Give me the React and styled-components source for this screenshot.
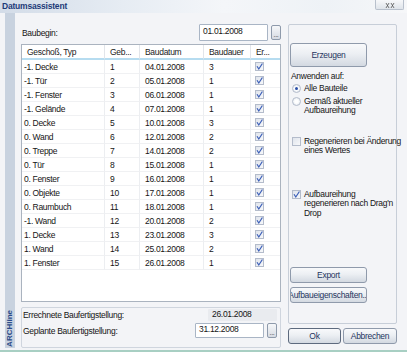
import React from "react";
import styled, { createGlobalStyle } from "styled-components";

const Global = createGlobalStyle`
html, body {
  margin: 0;
  padding: 0;
  background: #ffffff;
}
body {
  font-family: "Liberation Sans", Arial, sans-serif;
  font-size: 8.5px;
  letter-spacing: -0.3px;
  color: #151515;
}
`;

const Window = styled.div`
width: 407px;
height: 352px;
box-sizing: border-box;
background: #f3f4f7;
border-bottom: 2px solid #a8cfc3;
display: flex;
flex-direction: column;
`;

const TitleBar = styled.div`
height: 13px;
display: flex;
align-items: flex-start;
justify-content: space-between;
background: linear-gradient(to right, #d3dce8 0%, #e6ecf3 30%, #f4f6f9 55%, #eef2f6 80%, #f6f7f9 100%);
`;

const Title = styled.div`
font-weight: bold;
font-size: 8.5px;
letter-spacing: -0.2px;
color: #1d3a78;
padding: 1px 0 0 2px;
`;

const CloseButton = styled.div`
width: 29px;
height: 10px;
margin-right: 3px;
box-sizing: border-box;
border: 1px solid #b8c0cc;
border-top: none;
border-radius: 0 0 2px 2px;
background: linear-gradient(#f7f8fa, #dfe4ea);
display: flex;
justify-content: center;
align-items: flex-end;
`;

const Body = styled.div`
flex: 1;
display: flex;
`;

const SideStrip = styled.div`
width: 10px;
margin-left: 5px;
margin-bottom: 2px;
background: #c8d2df;
display: flex;
align-items: flex-end;
justify-content: center;
`;

const Brand = styled.div`
writing-mode: vertical-rl;
transform: rotate(180deg);
font-weight: bold;
font-size: 8px;
letter-spacing: 0;
color: #2a4b88;
line-height: 10px;
padding-top: 1px;
`;

const Main = styled.div`
width: 260px;
margin-left: 6px;
display: flex;
flex-direction: column;
`;

const FieldRow = styled.div`
display: flex;
align-items: center;
height: ${p => p.h || 17}px;
margin-top: ${p => p.mt || 0}px;
padding-left: ${p => p.pl || 0}px;
`;

const Label = styled.div`
flex: 1;
`;

const DateInput = styled.div`
width: 69px;
height: ${p => p.h || 17}px;
box-sizing: border-box;
border: 1px solid #a9b5c5;
border-radius: 1px;
background: ${p => (p.readOnly ? "#e9ebef" : "#ffffff")};
border-color: ${p => (p.readOnly ? "#e9ebef" : "#a9b5c5")};
padding: 1px 0 0 3px;
line-height: ${p => (p.h || 17) - 6}px;
`;

const DotsButton = styled.div`
width: 10px;
height: 15px;
margin-left: 3px;
box-sizing: border-box;
border: 1px solid #8e9aab;
border-radius: 2px;
background: linear-gradient(#f6f7f9, #d6dbe3);
font-size: 7px;
line-height: 17px;
text-align: center;
color: #444;
visibility: ${p => (p.hidden ? "hidden" : "visible")};
`;

const Table = styled.div`
margin-top: 3px;
height: 258px;
box-sizing: border-box;
border: 1px solid #aab3bf;
background: #ffffff;
`;

const Grid = styled.div`
display: grid;
grid-template-columns: 83px 35px 64px 47px 1fr;
`;

const HeadCell = styled.div`
height: 13px;
line-height: 14px;
padding-left: ${p => p.pl || 5}px;
border-bottom: 2px solid #b6dcf0;
border-right: ${p => (p.last ? "none" : "1px solid #e2e5ea")};
color: #222;
white-space: nowrap;
`;

const Cell = styled.div`
height: 14px;
line-height: 14px;
padding-left: ${p => p.pl || 2}px;
border-bottom: 1px solid #f0f1f3;
border-right: ${p => (p.last ? "none" : "1px solid #eceef1")};
box-sizing: border-box;
white-space: nowrap;
display: flex;
align-items: center;
`;

const CheckBox = styled.div`
width: 9px;
height: 9px;
box-sizing: border-box;
border: 1px solid #b4bccb;
background: linear-gradient(135deg, #dfe4ec, #f7f8fa);
flex-shrink: 0;
position: relative;
`;

const Tick = () => (
  <svg width="9" height="9" viewBox="0 0 9 9" style={{ position: "absolute", left: -1, top: -1 }}>
    <path d="M2 4.2 L3.8 7 L7.4 1.5" fill="none" stroke="#3b5fb8" strokeWidth="1.2" />
  </svg>
);

const Check = ({ checked }) => <CheckBox>{checked && <Tick />}</CheckBox>;

const FooterGroup = styled.div`
margin-top: 5px;
height: 41px;
box-sizing: border-box;
border: 1px solid #cfd5de;
border-radius: 2px;
padding: 1px 3px 0 1px;
`;

const RightCol = styled.div`
width: 109px;
margin-left: 7px;
margin-top: 11px;
display: flex;
flex-direction: column;
`;

const Group = styled.div`
height: 300px;
box-sizing: border-box;
border: 1px solid #c7ced8;
border-radius: 2px;
padding: 18px 0 0 1px;
display: flex;
flex-direction: column;
`;

const Button = styled.div`
width: ${p => p.w || 77}px;
height: ${p => p.h || 16}px;
box-sizing: border-box;
border: 1px solid ${p => (p.primary ? "#5d6a7e" : "#8f9aab")};
border-radius: 3px;
background: linear-gradient(#f8f9fb 0%, #eceff3 45%, #d3d9e1 100%);
display: flex;
align-items: center;
justify-content: center;
color: #1f3560;
white-space: nowrap;
overflow: hidden;
margin-top: ${p => p.mt || 0}px;
`;

const Caption = styled.div`
margin-top: ${p => p.mt || 0}px;
padding-left: 1px;
line-height: 10px;
`;

const Option = styled.div`
display: flex;
align-items: flex-start;
margin-top: ${p => p.mt || 0}px;
padding-left: 2px;
line-height: 9.5px;
`;

const Radio = styled.div`
width: 9px;
height: 9px;
box-sizing: border-box;
border-radius: 50%;
border: 1px solid #b4bccb;
background: radial-gradient(circle, #ffffff 30%, #dde3eb 100%);
margin-right: 3px;
flex-shrink: 0;
display: flex;
align-items: center;
justify-content: center;
&::after {
  content: "";
  width: 3px;
  height: 3px;
  border-radius: 50%;
  background: ${p => (p.checked ? "#2a4fa8" : "transparent")};
}
`;

const OptionText = styled.div`
margin-left: ${p => p.ml || 0}px;
white-space: nowrap;
`;

const Spacer = styled.div`
flex: 1;
`;

const DialogButtons = styled.div`
display: flex;
gap: 2px;
margin-top: 4px;
`;

const rows = [
  ["-1. Decke", 1, "04.01.2008", 3],
  ["-1. Tür", 2, "05.01.2008", 1],
  ["-1. Fenster", 3, "06.01.2008", 1],
  ["-1. Gelände", 4, "07.01.2008", 1],
  ["0. Decke", 5, "10.01.2008", 3],
  ["0. Wand", 6, "12.01.2008", 2],
  ["0. Treppe", 7, "14.01.2008", 2],
  ["0. Tür", 8, "15.01.2008", 1],
  ["0. Fenster", 9, "16.01.2008", 1],
  ["0. Objekte", 10, "17.01.2008", 1],
  ["0. Raumbuch", 11, "18.01.2008", 1],
  ["-1. Wand", 12, "20.01.2008", 2],
  ["1. Decke", 13, "23.01.2008", 3],
  ["1. Wand", 14, "25.01.2008", 2],
  ["1. Fenster", 15, "26.01.2008", 1],
];

const App = () => {
  return (
    <Window>
      <Global />
      <TitleBar>
        <Title>Datumsassistent</Title>
        <CloseButton>
          <svg width="10" height="6" viewBox="0 0 10 6">
            <path d="M1 0 L4 5 M4 0 L1 5 M6 0 L9 5 M9 0 L6 5" stroke="#555" strokeWidth="0.8" fill="none" />
          </svg>
        </CloseButton>
      </TitleBar>
      <Body>
        <SideStrip>
          <Brand>ARCHline</Brand>
        </SideStrip>
        <Main>
          <FieldRow mt={11} pl={1}>
            <Label>Baubegin:</Label>
            <DateInput>01.01.2008</DateInput>
            <DotsButton>...</DotsButton>
          </FieldRow>
          <Table>
            <Grid>
              <HeadCell>Geschoß, Typ</HeadCell>
              <HeadCell>Geb...</HeadCell>
              <HeadCell>Baudatum</HeadCell>
              <HeadCell>Baudauer</HeadCell>
              <HeadCell last>Er...</HeadCell>
              {rows.map(r => (
                <React.Fragment key={r[1]}>
                  <Cell>{r[0]}</Cell>
                  <Cell pl={5}>{r[1]}</Cell>
                  <Cell pl={5}>{r[2]}</Cell>
                  <Cell pl={5}>{r[3]}</Cell>
                  <Cell pl={4} last>
                    <Check checked />
                  </Cell>
                </React.Fragment>
              ))}
            </Grid>
          </Table>
          <FooterGroup>
            <FieldRow h={12}>
              <Label>Errechnete Baufertigstellung:</Label>
              <DateInput readOnly h={12}>26.01.2008</DateInput>
              <DotsButton hidden />
            </FieldRow>
            <FieldRow h={15} mt={2}>
              <Label>Geplante Baufertigstellung:</Label>
              <DateInput h={15}>31.12.2008</DateInput>
              <DotsButton>...</DotsButton>
            </FieldRow>
          </FooterGroup>
        </Main>
        <RightCol>
          <Group>
            <Button h={24}>Erzeugen</Button>
            <Caption mt={4}>Anwenden auf:</Caption>
            <Option mt={3}>
              <Radio checked />
              <OptionText>Alle Bauteile</OptionText>
            </Option>
            <Option mt={3}>
              <Radio />
              <OptionText>
                Gemäß aktueller
                <br />
                Aufbaureihung
              </OptionText>
            </Option>
            <Option mt={21}>
              <Check />
              <OptionText ml={3}>
                Regenerieren bei Änderung
                <br />
                eines Wertes
              </OptionText>
            </Option>
            <Option mt={34}>
              <Check checked />
              <OptionText ml={3}>
                Aufbaureihung
                <br />
                regenerieren nach Drag'n
                <br />
                Drop
              </OptionText>
            </Option>
            <Spacer />
            <Button>Export</Button>
            <Button mt={4}>Aufbaueigenschaften...</Button>
            <div style={{ height: 20 }} />
          </Group>
          <DialogButtons>
            <Button w={53} primary>Ok</Button>
            <Button w={54}>Abbrechen</Button>
          </DialogButtons>
        </RightCol>
      </Body>
    </Window>
  );
};

export default App;
